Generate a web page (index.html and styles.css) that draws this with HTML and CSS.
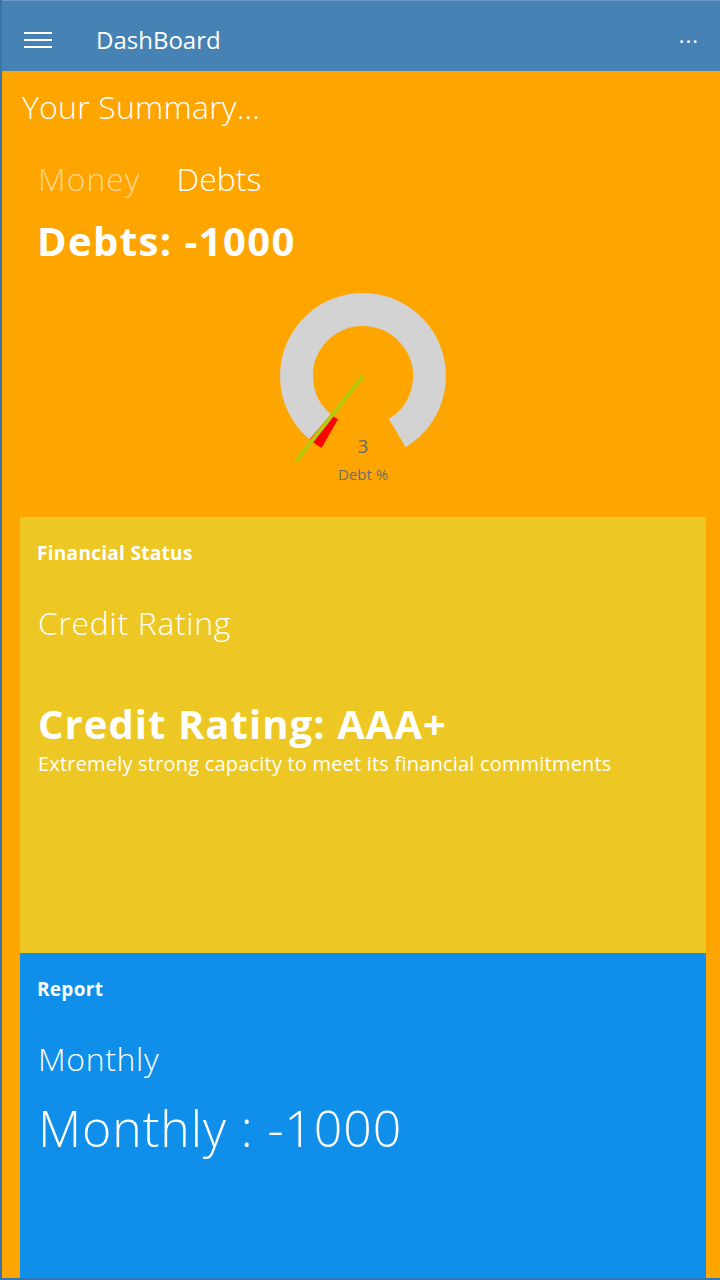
FILE: index.html
```html
<!DOCTYPE html>
<html lang="en">
<head>
<meta charset="utf-8">
<title>DashBoard</title>
<link rel="stylesheet" href="styles.css">
</head>
<body>
<div class="app">
  <header class="topbar">
    <div class="hamburger" aria-label="Menu"><span></span><span></span><span></span></div>
    <div class="title">DashBoard</div>
    <div class="more">&middot;&middot;&middot;</div>
  </header>
  <main class="main">
    <h1 class="summary-title">Your Summary...</h1>
    <nav class="tabs">
      <span class="tab tab-inactive">Money</span>
      <span class="tab tab-active">Debts</span>
    </nav>
    <div class="amount">Debts: -1000</div>
    <div class="gauge-wrap">
      <svg class="gauge" width="200" height="210" viewBox="0 0 200 210">
        <path d="M57.25 150.94 A66.5 66.5 0 1 1 134.25 157.0" fill="none" stroke="#D3D3D3" stroke-width="33"/>
        <path d="M57.25 150.94 A66.5 66.5 0 0 0 66.75 157.59" fill="none" stroke="#FF0000" stroke-width="33"/>
        <line x1="100" y1="100" x2="33" y2="185" stroke="#B7C90C" stroke-width="4"/>
        <text x="100" y="177" class="gauge-value">3</text>
        <text x="100" y="204" class="gauge-label">Debt %</text>
      </svg>
    </div>
    <section class="card card-status">
      <h2 class="card-title">Financial Status</h2>
      <div class="card-sub">Credit Rating</div>
      <div class="rating">Credit Rating: AAA+</div>
      <div class="rating-desc">Extremely strong capacity to meet its financial commitments</div>
    </section>
    <section class="card card-report">
      <h2 class="card-title">Report</h2>
      <div class="card-sub">Monthly</div>
      <div class="monthly">Monthly : -1000</div>
    </section>
  </main>
</div>
</body>
</html>
```

FILE: styles.css
```css
* { box-sizing: border-box; }
html, body { margin: 0; padding: 0; }
body {
  width: 720px;
  height: 1280px;
  overflow: hidden;
  font-family: "Open Sans", "Noto Sans", sans-serif;
  color: #fff;
}
.app {
  width: 720px;
  height: 1280px;
  display: flex;
  flex-direction: column;
  border-left: 2px solid #3c74a8;
  border-bottom: 2px solid #2f78b8;
  overflow: hidden;
}
.topbar {
  height: 71px;
  flex: none;
  background: #4682B4;
  border-top: 1px solid #6a9ccb;
  display: flex;
  align-items: center;
  padding: 7px 0 0 22px;
}
.hamburger {
  width: 28px;
  display: flex;
  flex-direction: column;
  gap: 5px;
}
.hamburger span {
  display: block;
  height: 2px;
  background: #fff;
}
.title {
  margin-left: 44px;
  font-size: 24px;
  line-height: 32px;
}
.more {
  margin-left: auto;
  margin-right: 21px;
  font-size: 22px;
  letter-spacing: 1px;
  line-height: 20px;
}
.main {
  flex: 1;
  min-height: 0;
  background: #FFA500;
  padding: 0 14px 0 18px;
  display: flex;
  flex-direction: column;
}
.summary-title {
  margin: 15px 0 0 2px;
  font-size: 32px;
  line-height: 41px;
  font-weight: 300;
  letter-spacing: 0.2px;
}
.tabs {
  display: flex;
  gap: 36px;
  margin: 30px 0 0 18px;
  font-size: 32px;
  line-height: 44px;
  font-weight: 300;
}
.tab-inactive { color: rgba(255, 255, 255, 0.55); letter-spacing: 1px; }
.tab-active { color: #fff; }
.amount {
  margin: 14px 0 0 17px;
  font-size: 40px;
  line-height: 52px;
  font-weight: 700;
  letter-spacing: 1.4px;
}
.gauge-wrap {
  margin-top: 9px;
  display: flex;
  justify-content: center;
}
.gauge { display: block; }
.gauge-value {
  font-family: "Open Sans", sans-serif;
  font-size: 19px;
  fill: #646a72;
  text-anchor: middle;
}
.gauge-label {
  font-family: "Open Sans", sans-serif;
  font-size: 15px;
  fill: #6e6e6e;
  text-anchor: middle;
}
.card {
  padding: 23px 17px 0 18px;
}
.card-status {
  margin-top: 31px;
  height: 436px;
  flex: none;
  background: #EDC824;
}
.card-report {
  flex: 1;
  background: #0F8FE9;
}
.card-title {
  margin: 0 0 0 -1px;
  font-size: 19px;
  line-height: 26px;
  font-weight: 700;
  letter-spacing: 0.3px;
}
.card-sub {
  margin-top: 35px;
  font-size: 32px;
  line-height: 44px;
  font-weight: 300;
  letter-spacing: 0.65px;
}
.rating {
  margin-top: 53px;
  font-size: 40px;
  line-height: 52px;
  font-weight: 700;
  letter-spacing: 1.05px;
}
.rating-desc {
  margin-top: 1px;
  font-size: 20px;
  line-height: 26px;
  letter-spacing: 0.2px;
}
.monthly {
  margin-top: 15px;
  font-size: 50px;
  line-height: 64px;
  font-weight: 300;
  letter-spacing: 0.9px;
}
```
